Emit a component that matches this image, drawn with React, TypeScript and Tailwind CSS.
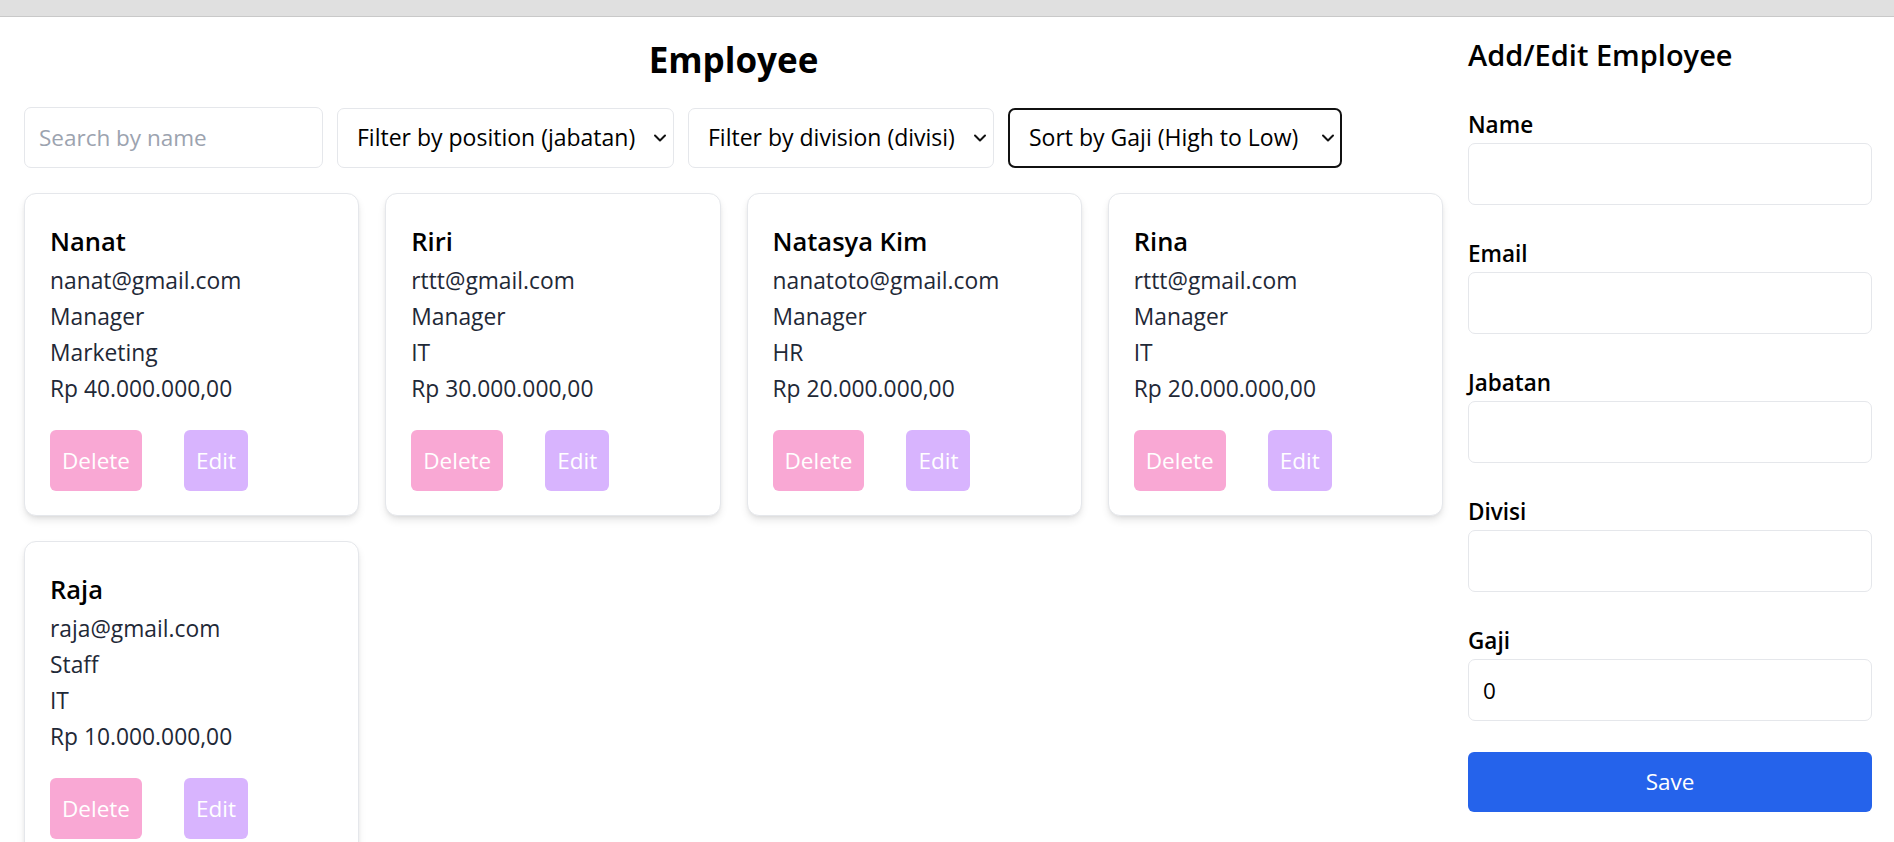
import { useState } from "react";

type Employee = {
  name: string;
  email: string;
  jabatan: string;
  divisi: string;
  gaji: number;
};

const employees: Employee[] = [
  { name: "Nanat", email: "nanat@gmail.com", jabatan: "Manager", divisi: "Marketing", gaji: 40000000 },
  { name: "Riri", email: "rttt@gmail.com", jabatan: "Manager", divisi: "IT", gaji: 30000000 },
  { name: "Natasya Kim", email: "nanatoto@gmail.com", jabatan: "Manager", divisi: "HR", gaji: 20000000 },
  { name: "Rina", email: "rttt@gmail.com", jabatan: "Manager", divisi: "IT", gaji: 20000000 },
  { name: "Raja", email: "raja@gmail.com", jabatan: "Staff", divisi: "IT", gaji: 10000000 },
];

const rupiah = (n: number) =>
  "Rp " + n.toLocaleString("de-DE", { minimumFractionDigits: 2, maximumFractionDigits: 2 });

function Chevron() {
  return (
    <svg
      className="pointer-events-none absolute right-[7px] top-1/2 -translate-y-1/2"
      width="14"
      height="9"
      viewBox="0 0 14 9"
      fill="none"
    >
      <path d="M2 2l5 5 5-5" stroke="#111" strokeWidth="2" strokeLinecap="round" strokeLinejoin="round" />
    </svg>
  );
}

function FilterSelect({ label, width, active }: { label: string; width: string; active?: boolean }) {
  return (
    <div className={`relative ${width}`}>
      <select
        className={`h-[60px] w-full appearance-none rounded-[7px] bg-white pl-[19px] text-[23px] text-black outline-none ${
          active ? "border-2 border-[#111]" : "border border-[#e5e7eb]"
        }`}
      >
        <option>{label}</option>
      </select>
      <Chevron />
    </div>
  );
}

function EmployeeCard({ emp }: { emp: Employee }) {
  return (
    <div className="rounded-[12px] border border-[#e5e7eb] bg-white px-[25px] pt-[25px] pb-[24px] shadow-[0_5px_8px_-1px_rgba(0,0,0,0.1),0_2px_5px_-2px_rgba(0,0,0,0.1)]">
      <h3 className="text-[25.5px] font-semibold leading-[44px] text-black">{emp.name}</h3>
      <div className="text-[22.8px] leading-[36px] text-[#1f2937]">
        <p>{emp.email}</p>
        <p>{emp.jabatan}</p>
        <p>{emp.divisi}</p>
        <p>{rupiah(emp.gaji)}</p>
      </div>
      <div className="mt-[23px] flex">
        <button className="h-[61px] rounded-[6px] bg-[#f9a8d4] px-[12px] text-[22.5px] text-white">Delete</button>
        <button className="ml-[42px] h-[61px] rounded-[6px] bg-[#d8b4fe] px-[12px] text-[22.5px] text-white">Edit</button>
      </div>
    </div>
  );
}

function Field({ label, value }: { label: string; value?: string }) {
  return (
    <div className="mb-[31px]">
      <label className="block text-[22.5px] font-semibold leading-[35px] text-black">{label}</label>
      <input
        defaultValue={value}
        className="mt-[1px] h-[62px] w-full rounded-[7px] border border-[#e5e7eb] px-[14px] text-[22.5px] text-black outline-none"
      />
    </div>
  );
}

export default function App() {
  const [search, setSearch] = useState("");
  const list = employees.filter((e) => e.name.toLowerCase().includes(search.toLowerCase()));

  return (
    <div className="min-h-screen bg-white font-['Open_Sans',sans-serif]">
      <div className="h-[17px] border-b border-[#c9c9c9] bg-[#e0e0e0]" />

      <div className="flex gap-[25px] pt-[18px] pl-[24px] pr-[22px]">
        {/* list */}
        <div className="flex-1">
          <h1 className="mt-[2px] mb-[25px] text-center text-[35px] font-bold leading-[45px] text-black">Employee</h1>

          <div className="mb-[25px] flex items-center gap-[14px]">
            <input
              value={search}
              onChange={(e) => setSearch(e.target.value)}
              placeholder="Search by name"
              className="h-[61px] w-[299px] rounded-[7px] border border-[#e5e7eb] px-[14px] text-[22.5px] outline-none placeholder:text-[#9ca3af]"
            />
            <FilterSelect label="Filter by position (jabatan)" width="w-[337px]" />
            <FilterSelect label="Filter by division (divisi)" width="w-[306px]" />
            <FilterSelect label="Sort by Gaji (High to Low)" width="w-[334px]" active />
          </div>

          <div className="grid grid-cols-4 gap-x-[26px] gap-y-[25px]">
            {list.map((emp, i) => (
              <EmployeeCard key={i} emp={emp} />
            ))}
          </div>
        </div>

        {/* form */}
        <div className="w-[404px] shrink-0">
          <h2 className="mb-[32px] text-[29px] font-semibold leading-[40px] text-black">Add/Edit Employee</h2>
          <Field label="Name" />
          <Field label="Email" />
          <Field label="Jabatan" />
          <Field label="Divisi" />
          <Field label="Gaji" value="0" />
          <button className="h-[60px] w-full rounded-[6px] bg-[#2563eb] text-[22.5px] text-white">Save</button>
        </div>
      </div>
    </div>
  );
}
